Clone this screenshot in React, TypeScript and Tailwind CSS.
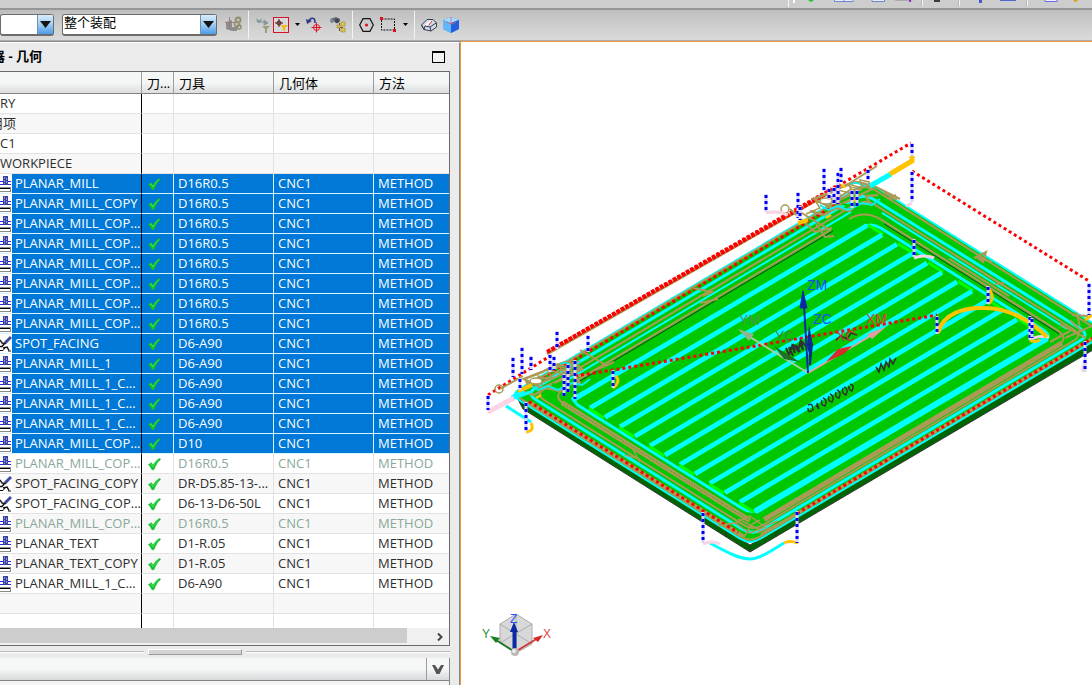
import type { ReactNode } from 'react'

type Kind = 'group' | 'mill' | 'spot'

interface Operation {
  name: string
  kind: Kind
  tool?: string
  state?: 'selected' | 'dimmed'
}

const OPERATIONS: Operation[] = [
  { name: 'RY', kind: 'group' },
  { name: '用项', kind: 'group' },
  { name: 'C1', kind: 'group' },
  { name: 'WORKPIECE', kind: 'group' },
  { name: 'PLANAR_MILL', kind: 'mill', tool: 'D16R0.5', state: 'selected' },
  { name: 'PLANAR_MILL_COPY', kind: 'mill', tool: 'D16R0.5', state: 'selected' },
  { name: 'PLANAR_MILL_COP...', kind: 'mill', tool: 'D16R0.5', state: 'selected' },
  { name: 'PLANAR_MILL_COP...', kind: 'mill', tool: 'D16R0.5', state: 'selected' },
  { name: 'PLANAR_MILL_COP...', kind: 'mill', tool: 'D16R0.5', state: 'selected' },
  { name: 'PLANAR_MILL_COP...', kind: 'mill', tool: 'D16R0.5', state: 'selected' },
  { name: 'PLANAR_MILL_COP...', kind: 'mill', tool: 'D16R0.5', state: 'selected' },
  { name: 'PLANAR_MILL_COP...', kind: 'mill', tool: 'D16R0.5', state: 'selected' },
  { name: 'SPOT_FACING', kind: 'spot', tool: 'D6-A90', state: 'selected' },
  { name: 'PLANAR_MILL_1', kind: 'mill', tool: 'D6-A90', state: 'selected' },
  { name: 'PLANAR_MILL_1_C...', kind: 'mill', tool: 'D6-A90', state: 'selected' },
  { name: 'PLANAR_MILL_1_C...', kind: 'mill', tool: 'D6-A90', state: 'selected' },
  { name: 'PLANAR_MILL_1_C...', kind: 'mill', tool: 'D6-A90', state: 'selected' },
  { name: 'PLANAR_MILL_COP...', kind: 'mill', tool: 'D10', state: 'selected' },
  { name: 'PLANAR_MILL_COP...', kind: 'mill', tool: 'D16R0.5', state: 'dimmed' },
  { name: 'SPOT_FACING_COPY', kind: 'spot', tool: 'DR-D5.85-13-...' },
  { name: 'SPOT_FACING_COP...', kind: 'spot', tool: 'D6-13-D6-50L' },
  { name: 'PLANAR_MILL_COP...', kind: 'mill', tool: 'D16R0.5', state: 'dimmed' },
  { name: 'PLANAR_TEXT', kind: 'mill', tool: 'D1-R.05' },
  { name: 'PLANAR_TEXT_COPY', kind: 'mill', tool: 'D1-R.05' },
  { name: 'PLANAR_MILL_1_C...', kind: 'mill', tool: 'D6-A90' },
]

function MillIcon() {
  return (
    <svg width="12" height="19" viewBox="0 0 12 19" className="shrink-0 bg-white" shapeRendering="crispEdges">
      <path d="M0 7.5H3M0 10.5H3M8 7.5H11M8 10.5H11" stroke="#2a2ae0" />
      <rect x="3" y="2" width="5" height="9" fill="#3d429c" />
      <path d="M4.5 3V10M6.5 4V9" stroke="#8b92d8" strokeDasharray="2 1" />
      <rect x="0" y="13" width="11" height="5" fill="#8a8a8a" />
      <rect x="0" y="14" width="10" height="3" fill="#fff" />
      <path d="M0 14.5H10" stroke="#000" />
    </svg>
  )
}

function SpotIcon() {
  return (
    <svg width="12" height="19" viewBox="0 0 12 19" className="shrink-0 bg-white">
      <path d="M11 3L5 9" stroke="#3f48a0" strokeWidth="3" />
      <path d="M0 6L2 9L6 9.500" stroke="#222" fill="none" strokeWidth="1.500" />
      <path d="M0 12.500H2L4.500 9.500M3 14L7 13L9 16.500" stroke="#111" fill="none" strokeWidth="1.500" />
      <path d="M0 16.500H3L5 14M8 17H11" stroke="#111" fill="none" />
    </svg>
  )
}

function CheckIcon() {
  return (
    <svg width="13" height="14" viewBox="0 0 13 14" role="img" aria-label="OK">
      <path d="M0.5 7.5L3.5 5.8L5 8.5C6.5 5.5 9 2.500 12 1.500L12.400 2.600C9.500 5 7.500 8.500 6 12.600L4 12.800C3.200 10.800 2 9 .5 7.500Z" fill="#10c52c" stroke="#10b428" strokeWidth=".6" />
      <path d="M2 7.300L3.300 6.800L5 10C7 6 9 4 11 2.600" stroke="#3ee052" fill="none" />
    </svg>
  )
}

function ToolButton({ label, children }: { label: string; children: ReactNode }) {
  return (
    <button type="button" aria-label={label} className="flex h-[22px] shrink-0 items-center justify-center">
      {children}
    </button>
  )
}

function Separator() {
  return <span className="h-7 w-px shrink-0 bg-[#f3f3f3]" />
}

function Caret() {
  return (
    <svg width="5" height="3" viewBox="0 0 5 3">
      <path d="M0 0H5L2.5 3Z" fill="#000" />
    </svg>
  )
}

function Target({ x, y, r, color }: { x: number; y: number; r: number; color: string }) {
  return (
    <g stroke={color} fill="none">
      <circle cx={x} cy={y} r={r} />
      <path d={`M${x - r - 2} ${y}H${x + r + 2}M${x} ${y - r - 2}V${y + r + 2}`} />
    </g>
  )
}

function Combo({ label, value, className }: { label: string; value: string; className: string }) {
  return (
    <div className={`relative h-[22px] shrink-0 ${className}`}>
      <select
        aria-label={label}
        className="block h-full w-full appearance-none rounded-[3px] border border-b-2 border-[#6c6c6c] bg-white pb-1 pl-px text-[13px] leading-[15px] text-black"
      >
        <option>{value}</option>
      </select>
      <span className="pointer-events-none absolute top-px right-px flex h-[19px] w-4 items-center justify-center border-l border-[#7291ad] bg-linear-to-b from-[#d9ecfb] via-[#9fcdf3] to-[#4a9be8]">
        <svg width="11" height="7" viewBox="0 0 11 7">
          <path d="M0 0H11L5.5 7Z" fill="#151515" />
        </svg>
      </span>
    </div>
  )
}

function Ribbon() {
  return (
    <div className="flex h-[10px] shrink-0 justify-end overflow-hidden border-b-2 border-[#969696] bg-[#cdcdcd]">
      <svg width="304" height="8" viewBox="788 0 304 8" aria-hidden="true">
        <path d="M788.5 0V7M922.5 0V6M959.5 0V6M1027.5 0V6" stroke="#f5f5f5" />
        <path d="M921.5 0V6M958.5 0V6M1026.5 0V6" stroke="#b5b5b5" />
        <path d="M793 0h2v3h-2z" fill="#fff" />
        <path d="M808 0h6l-3 2z" fill="#16c42d" />
        <path d="M834.5 0V1.5H853V0M872 0V1.5H884.5V0" stroke="#6f86cf" fill="#e8effc" />
        <path d="M844 0V1" stroke="#6f86cf" />
        <path d="M893 0H914L910 1H897Z" fill="#aaa" />
        <path d="M910 0V2" stroke="#8d2bc9" strokeWidth="2" />
        <path d="M934 0h6v2h-6z" fill="#383b45" />
        <path d="M980.5 0V3" stroke="#4559c8" strokeWidth="3" />
        <path d="M1000 0.5H1016" stroke="#5563cf" />
        <path d="M1045 0V1.5H1057V0" stroke="#6a6ae8" fill="#eef" />
        <circle cx="1075.5" cy="0" r="2" fill="#e0a018" />
      </svg>
    </div>
  )
}

function Toolbar() {
  return (
    <div className="flex h-[31px] shrink-0 items-center overflow-hidden border-b border-[#aaaab0] bg-linear-to-b from-[#bebebe] via-[#cecece] to-[#dadada] pb-px">
      <Combo label="类型过滤器" value="" className="w-[54px]" />
      <Combo label="选择范围" value="整个装配" className="ml-2 w-[155px]" />
      <div className="ml-2 flex items-center gap-[6px]">
        <ToolButton label="装配约束">
          <svg width="17" height="18" viewBox="0 0 17 18">
            <path d="M1 6L7 4V15L1 13ZM7 11H12V15H7Z" fill="#8d8d8d" />
            <path d="M4.5 1V12M0 6.5H9" stroke="#9a7f80" />
            <circle cx="13" cy="4" r="2.5" fill="none" stroke="#8f8b6d" strokeWidth="1.8" />
            <circle cx="12" cy="8" r="2.5" fill="none" stroke="#9a9675" strokeWidth="1.8" />
            <circle cx="14" cy="11" r="2" fill="none" stroke="#8f8b6d" strokeWidth="1.5" />
          </svg>
        </ToolButton>
        <Separator />
        <ToolButton label="重置过滤器">
          <svg width="16" height="18" viewBox="0 0 16 18">
            <path d="M1 2L2 6Q4 8 6 6L7 2L5 4L3 4Z" fill="#85979a" />
            <path d="M5 6H10M9 4L13 7L9 9Z" fill="#85979a" stroke="#85979a" />
            <path d="M7 10H15L12 13V17H10V13Z" fill="#a09a80" />
          </svg>
        </ToolButton>
        <button
          type="button"
          aria-label="常规选择过滤器"
          className="-ml-1 flex h-4 w-4 shrink-0 items-center justify-center border border-[#d4122a] bg-[#d9d9d9]"
        >
          <svg width="14" height="14" viewBox="0 0 14 14">
            <Target x={5} y={5} r={2} color="#4a1a20" />
            <path d="M6 7H14L11 10V14L9 12V10Z" fill="#f5b81f" />
          </svg>
        </button>
        <ToolButton label="过滤器选项">
          <Caret />
        </ToolButton>
        <ToolButton label="捕捉点">
          <svg width="17" height="18" viewBox="0 0 17 18">
            <path d="M3 6C3 2 9 0 9 6V7" fill="none" stroke="#2f3a86" strokeWidth="1.6" />
            <path d="M0 3L6 5L1 8Z" fill="#2f3a86" />
            <Target x={10.5} y={11.5} r={3} color="#e01428" />
          </svg>
        </ToolButton>
        <ToolButton label="查找">
          <svg width="17" height="18" viewBox="0 0 17 18">
            <path d="M1 3L7 1L11 3V6L8 4L5 6Z" fill="#5d6670" />
            <circle cx="3" cy="5" r="2" fill="#7d8a99" />
            <circle cx="8" cy="5" r="2.2" fill="#3f4852" />
            <path d="M10.5 7V15M10 11.5H14" stroke="#555" />
            <path d="M12 6h4v4h-4zM12 12h4v4h-4zM8 9h3v3H8z" fill="#e6c443" stroke="#8a7423" strokeWidth=".5" />
          </svg>
        </ToolButton>
        <Separator />
        <ToolButton label="多边形">
          <svg width="15" height="14" viewBox="0 0 15 14">
            <path d="M4 .7H11L14.3 7L11 13.3H4L.7 7Z" fill="none" stroke="#151515" strokeWidth="1.2" />
            <circle cx="7.5" cy="7" r="1.6" fill="#e01020" />
          </svg>
        </ToolButton>
        <ToolButton label="矩形选择">
          <svg width="17" height="15" viewBox="0 0 17 15">
            <rect x="1.5" y="2" width="13" height="11" fill="none" stroke="#111" strokeDasharray="2 1" />
            <path d="M0 0h3v3H0zM13 12h3v3h-3z" fill="#e01020" />
          </svg>
        </ToolButton>
        <ToolButton label="选择方式">
          <Caret />
        </ToolButton>
        <Separator />
        <ToolButton label="着色">
          <svg width="16" height="16" viewBox="0 0 16 16">
            <path d="M.5 8L6 2.5H12L15.5 6V10L10 14L3 12.5Z" fill="#d5dbe6" stroke="#333b4e" />
            <path d="M.5 8L3 12.500L4 9L9 10L15 6M9 10L10 14" stroke="#333b4e" fill="none" />
            <path d="M5 8L10 4" stroke="#fff" strokeWidth="2" />
            <path d="M8 8L11 4" stroke="#d33" />
          </svg>
        </ToolButton>
        <ToolButton label="实体">
          <svg width="16" height="18" viewBox="0 0 16 18">
            <path d="M0 4L8 1L16 4V13L8 17L0 13Z" fill="#2f8df0" />
            <path d="M0 4L8 1L16 4L8 7Z" fill="#a9dcff" />
            <path d="M0 4L8 7V17L0 13Z" fill="#60b8fb" />
            <path d="M8 7L16 4V13L8 17Z" fill="#2260dd" />
            <path d="M8 1V9M3 6L8 8L13 6" stroke="#d8607c" fill="none" strokeWidth=".8" />
          </svg>
        </ToolButton>
      </div>
    </div>
  )
}

function OperationRow({ op, index }: { op: Operation; index: number }) {
  const selected = op.state === 'selected'
  const rowColor = selected
    ? 'bg-[#0078d7] text-white'
    : `${index % 2 ? 'bg-[#f7f7f7]' : 'bg-white'} ${op.state === 'dimmed' ? 'text-[#8aa898]' : 'text-[#2e2e2e]'}`
  const line = selected ? 'border-[#d5f2ff]' : 'border-[#e2e2e2]'
  const isGroup = op.kind === 'group'

  return (
    <tr className={rowColor}>
      <td className={`border-r border-b border-r-black p-0 ${selected ? 'border-b-[#d5f2ff]' : 'border-b-[#e2e2e2]'}`}>
        <div className={`flex h-[19px] items-center overflow-hidden whitespace-nowrap ${isGroup ? '' : 'gap-[3px]'}`}>
          {op.kind === 'mill' && <MillIcon />}
          {op.kind === 'spot' && <SpotIcon />}
          <span className={op.name === '用项' ? '-ml-[10px]' : ''}>{op.name}</span>
        </div>
      </td>
      <td className={`border-r border-b p-0 ${line}`}>
        <div className="flex h-[19px] items-center pl-[6px]">{!isGroup && <CheckIcon />}</div>
      </td>
      <td className={`overflow-hidden border-r border-b p-0 pl-1 whitespace-nowrap ${line}`}>{op.tool}</td>
      <td className={`border-r border-b p-0 pl-1 ${line}`}>{!isGroup && 'CNC1'}</td>
      <td className={`border-b p-0 pl-1 ${line}`}>{!isGroup && 'METHOD'}</td>
    </tr>
  )
}

function Navigator() {
  const head = 'h-[22px] border-r border-b border-r-[#9d9d9d] border-b-[#858585] bg-linear-to-b from-[#f5f6f6] from-50% to-[#dcdddf] p-0 pt-px pl-[5px] text-left font-normal whitespace-nowrap'

  return (
    <aside className="flex w-[461px] max-w-1/2 shrink-0 flex-col border-t border-r border-t-[#8c8c8c] border-r-[#f09a38] bg-[#ebebeb]">
      <div className="flex min-h-0 flex-1 flex-col border-t border-r border-t-white border-r-[#858585]">
        <div className="flex h-7 shrink-0 items-center justify-between overflow-hidden pr-[14px]">
          <h1 className="-ml-2 text-[13px] font-bold whitespace-nowrap text-black">器 - 几何</h1>
          <button type="button" aria-label="最大化" className="h-3 w-[13px] border border-t-2 border-black bg-[#f2f2f2]" />
        </div>

        <div className="mr-[9px] flex min-h-0 flex-1 flex-col border-t border-r border-b border-[#6a6a6a] bg-white">
          <div className="min-h-0 flex-1 overflow-hidden">
            <table className="w-full table-fixed border-separate border-spacing-0 text-[13px] leading-[19px]">
              <colgroup>
                <col />
                <col className="w-8" />
                <col className="w-[100px]" />
                <col className="w-[100px]" />
                <col className="w-[75px]" />
              </colgroup>
              <thead className="leading-5 text-black">
                <tr>
                  <th className={head} aria-label="名称" />
                  <th className={head}>刀...</th>
                  <th className={head}>刀具</th>
                  <th className={head}>几何体</th>
                  <th className="h-[22px] border-b border-[#858585] bg-linear-to-b from-[#f5f6f6] from-50% to-[#dcdddf] p-0 pt-px pl-[5px] text-left font-normal">
                    方法
                  </th>
                </tr>
              </thead>
              <tbody>
                {OPERATIONS.map((op, i) => (
                  <OperationRow key={i} op={op} index={i} />
                ))}
                {['bg-[#f7f7f7]', 'bg-white'].map((bg) => (
                  <tr key={bg} className={bg}>
                    <td className="h-5 border-r border-b border-r-black border-b-[#e2e2e2] p-0" />
                    <td className="border-r border-b border-[#e2e2e2] p-0" />
                    <td className="border-r border-b border-[#e2e2e2] p-0" />
                    <td className="border-r border-b border-[#e2e2e2] p-0" />
                    <td className="border-b border-[#e2e2e2] p-0" />
                  </tr>
                ))}
              </tbody>
            </table>
          </div>
          <div className="flex h-[17px] shrink-0 items-center justify-between bg-[#f0f0f0] pr-[6px]">
            <div className="h-[15px] w-[407px] self-start bg-[#cdcdcd]" />
            <button type="button" aria-label="向右滚动">
              <svg width="6" height="8" viewBox="0 0 6 8" className="block">
                <path d="M1 .5L4.5 4L1 7.5" fill="none" stroke="#444" strokeWidth="2" />
              </svg>
            </button>
          </div>
        </div>

        <div className="mr-[9px] flex h-3 shrink-0 items-center gap-1">
          <span className="h-[2px] w-36 border-b border-white bg-[#b9b9b9]" />
          <span className="h-[6px] w-[94px] border border-t-white border-r-[#999] border-b-[#999] border-l-white bg-[#d4d4d4]" />
          <span className="h-[2px] flex-1 border-b border-white bg-[#b9b9b9]" />
        </div>

        <div className="mr-[9px] flex h-[23px] shrink-0 justify-end border-r border-b border-[#858585] bg-linear-to-b from-[#f6f7f7] from-50% to-[#d8d9da]">
          <button type="button" aria-label="展开" className="flex w-[23px] items-center justify-center border-l border-[#9d9d9d]">
            <svg width="12" height="9" viewBox="0 0 12 9">
              <path d="M0 0H3L6 4.5L9 0H12L7.5 9H4.5Z" fill="#555" />
            </svg>
          </button>
        </div>
        <div className="mr-[9px] h-1 shrink-0 border-r border-[#858585] bg-[#f4f4f4]" />
      </div>
    </aside>
  )
}

// Plate coordinates: u runs towards the upper right, v towards the lower right
function at(u: number, v: number) {
  return `${(522 + u + v).toFixed(1)} ${(402 - 0.593 * u + 0.627 * v).toFixed(1)}`
}

function line(u0: number, v0: number, u1: number, v1: number) {
  return `M${at(u0, v0)}L${at(u1, v1)}`
}

function ring(u0: number, v0: number, u1: number, v1: number, r: number) {
  return (
    `M${at(u0 + r, v0)}L${at(u1 - r, v0)}Q${at(u1, v0)} ${at(u1, v0 + r)}` +
    `L${at(u1, v1 - r)}Q${at(u1, v1)} ${at(u1 - r, v1)}` +
    `L${at(u0 + r, v1)}Q${at(u0, v1)} ${at(u0, v1 - r)}` +
    `L${at(u0, v0 + r)}Q${at(u0, v0)} ${at(u0 + r, v0)}Z`
  )
}

const STRIPES = Array.from({ length: 13 }, (_, i) => 23 + i * 15)

// x, top, bottom of every plunge and retract move
const PLUNGES = [
  [766, 194, 212], [798, 192, 218], [800, 206, 220], [824, 168, 191], [838, 172, 204],
  [841, 167, 182], [829, 188, 200], [834, 187, 204], [868, 169, 180], [912, 143, 156],
  [912, 171, 202], [914, 239, 257], [852, 190, 208], [857, 190, 206], [937, 316, 334],
  [988, 286, 304], [1030, 316, 340], [1032, 318, 338], [1089, 283, 315], [1085, 341, 372],
  [488, 395, 410], [513, 357, 377], [522, 347, 374], [531, 356, 370], [520, 378, 390],
  [557, 331, 349], [550, 354, 372], [554, 356, 370], [588, 335, 352], [564, 374, 396],
  [568, 364, 392], [575, 360, 399], [613, 370, 388], [526, 402, 431], [703, 512, 543],
  [797, 511, 543],
]

// Tangled finishing passes around a boss, reused at both left and top corners
function CornerPasses({ x, y }: { x: number; y: number }) {
  return (
    <g transform={`translate(${x} ${y})`} fill="none" stroke="#aa9a55" strokeWidth="1.5">
      <path d="M-44 20L-30 14L-34 8L-18 10L-22 2L-8 5L-12 -4L4 0L-2 -10L12 -6L10 -14L20 -12" />
      <path d="M-40 17L-26 21L-14 14L0 17L8 9L20 10L16 2L28 1" strokeWidth="2.5" />
      <path d="M-36 5L-18 -2L-6 -8L6 -12L16 -10L22 -5L12 0L-4 8L-18 14Z" strokeWidth="2.5" />
      <path d="M-28 6L-12 4L0 -4L12 -4M-20 9L-4 3L8 -3" strokeWidth="2" />
      <ellipse cx="-24" cy="7" rx="6" ry="3" fill="#fff" />
      <ellipse cx="6" cy="-9" rx="7" ry="3" />
      <path d="M-30 11L-22 16L-12 12L-2 16L12 9L22 11L30 5" stroke="#00f0f0" strokeWidth="2" />
      <path d="M-8 10L2 12L14 5" stroke="#00c800" strokeWidth="2" />
      <path d="M0 -10Q6 -13 11 -9" stroke="#00f0f0" />
      <path d="M-24 24L-19 21M-9 -9L-4 -7M3 7L8 5" stroke="#ffc400" strokeWidth="2.5" />
    </g>
  )
}

function Plate() {
  return (
    <g fill="none">
      <path d={`M${at(0, -4)}L${at(0, 228)}L${at(360, 228)}V340L750 552L523 409Z`} fill="#006400" stroke="#3a3a3a" />
      <path d="M750 545V552M726 531V537M776 530V537" stroke="#333" />
      <path d={ring(0, -12, 358, 228, 10)} fill="#00c800" stroke="#00ffff" strokeWidth="2" />

      <path d={ring(2, -11, 355, 226, 9)} stroke="#aa9a55" strokeWidth="2" />
      <path d={ring(9, -5, 347, 221, 10)} stroke="#00ffff" strokeWidth="3" />
      <path d={ring(13, 0, 343, 218, 10)} stroke="#aa9a55" strokeWidth="2" />
      <path d={line(40, 4, 325, 4) + line(340, 20, 340, 205)} stroke="#00ffff" strokeWidth="2" />
      <path d={line(20, 20, 20, 208) + line(28, 214, 326, 214)} stroke="#aa9a55" strokeWidth="5" />
      <path d={line(20, 20, 20, 208)} stroke="#00b400" strokeDasharray="1 2" />
      <path
        d={`M${at(20, 22)}Q${at(20, 9)} ${at(36, 9)}L${at(300, 9)}M${at(318, 9)}Q${at(334, 9)} ${at(334, 26)}L${at(334, 200)}Q${at(334, 214)} ${at(322, 214)}`}
        stroke="#aa9a55"
        strokeWidth="2"
      />
      <path d={line(45, 11, 300, 11) + line(332, 30, 332, 205)} stroke="#16401c" />
      <path d={line(337, 90, 337, 150) + line(343, 90, 343, 150)} stroke="#aa9a55" strokeWidth="2" />
      <path d={ring(26, 22, 327, 204, 10)} fill="#00c800" stroke="#00ffff" strokeWidth="3" />
      <path d={line(40, 22, 318, 22)} stroke="#00c800" strokeWidth="4" />

      {STRIPES.map((v, i) => (
        <g key={v}>
          <path d={line(i ? 30 : 27, v, 322, v)} stroke="#00ffff" strokeWidth={i === 12 ? 6 : 4.8} />
          {i < STRIPES.length - 1 && (
            <path
              d={i % 2 ? line(29, v, 29, v + 15) : line(323, v, 323, v + 15)}
              stroke="#00ff00"
              strokeWidth="3"
            />
          )}
        </g>
      ))}

      <path d={line(4, 3, 4, 218) + line(14, 225, 350, 225)} stroke="#aa9a55" strokeWidth="3" />
      <path
        d={line(4, 3, 4, 212) + line(50, 225, 350, 225) + line(20, -9, 330, -9)}
        stroke="#ff0000"
        strokeWidth="3"
        strokeDasharray="3 3"
      />
    </g>
  )
}

function Toolpaths() {
  return (
    <g fill="none">
      {/* rapid moves */}
      <path d="M547 354L836 189" stroke="#aa9a55" strokeWidth="3" />
      <path d="M547 352L838 187" stroke="#ff0000" strokeWidth="4" strokeDasharray="4 1" />
      <path d="M560 344L838 185" stroke="#ff0000" strokeWidth="3" strokeDasharray="3 2" />
      <path d="M488 395L550 356M838 186L911 143M912 171L1089 281" stroke="#ff0000" strokeWidth="3" strokeDasharray="3 3" />

      <CornerPasses x={850} y={194} />
      <CornerPasses x={560} y={374} />
      <g stroke="#aa9a55" strokeWidth="2">
        <path d="M500 389L523 376M790 209L815 232L832 228M800 212L830 230M580 350L606 365M596 370L614 362" />
        <circle cx="499" cy="389" r="4" strokeWidth="1.5" />
        <circle cx="785" cy="209" r="4" strokeWidth="1.5" />
        <path d="M845 186L877 166M816 224L825 237L834 236M868 183L900 199" />
        <path d="M884 193L892 197L896 195L890 198L897 199M693 288L712 292L703 296M700 303L718 299" />
        <path d="M974 258L986 252L983 262L976 257L992 262M995 284L1004 283" />
        <path d="M625 455L640 459M632 448L640 462M735 523L750 516L765 527L750 533ZM718 526L740 522" strokeWidth="1.5" />
        <path d="M738 519L760 530M744 537L752 524L760 520M757 533L784 522M764 526L778 521" strokeWidth="1.5" />
        <path d="M1060 324L1086 338M1065 338L1092 326M1070 320L1082 332M1050 342L1070 331M1076 312L1080 326M1072 315L1088 316" />
      </g>

      <path d="M575 376L613 370L690 357L808 337L937 315" stroke="#ff0000" strokeWidth="3" strokeDasharray="3 3" />

      {/* engage and retract arcs */}
      <path d="M506 406L531 422M515 398L530 392M870 186L891 174M710 543C728 553 740 559 750 559C760 559 772 550 784 543" stroke="#00ffff" strokeWidth="3" />
      <path d="M870 186L891 174M512 398L524 391" stroke="#00ffff" strokeWidth="5" />
      <path d="M488 412L514 398" stroke="#f8d4e4" strokeWidth="5" />
      <path d="M766 213Q778 210 788 215M703 544Q712 540 720 544M912 203L906 206M1084 372Q1080 367 1087 362" stroke="#f8d4e4" strokeWidth="3" />
      <path d="M914 258Q924 254 934 258M1031 339Q1040 335 1049 337" stroke="#f8d4e4" strokeWidth="3" />
      <path d="M890 174L912 161V156" stroke="#ffc400" strokeWidth="5" />
      <path d="M938 333C943 313 965 307 985 308C1010 308 1032 322 1047 337" stroke="#ffc400" strokeWidth="4" />
      <path d="M989 289Q996 299 988 304M613 388Q621 382 616 376M526 432Q535 431 531 423M784 543Q790 540 798 543M1030 340Q1034 343 1040 340M1085 320L1092 315" stroke="#ffc400" strokeWidth="3" />
      <path d="M518 391L532 385M798 223L808 220" stroke="#ffc400" strokeWidth="4" />

      {PLUNGES.map(([x, top, bottom], i) => (
        <g key={i} strokeWidth="3">
          <path d={`M${x} ${top}V${bottom}`} stroke="#d6d6ff" />
          <path d={`M${x} ${top + 1}V${bottom}`} stroke="#0000f5" strokeDasharray="3 3" />
        </g>
      ))}
    </g>
  )
}

function Axes() {
  return (
    <g fontFamily="Liberation Sans, sans-serif" fontSize="14">
      {/* engraved text on the part */}
      <g fill="none" stroke="#303030" strokeWidth="1.5">
        <path d="M786 348L789 355L792 346L795 353L793 344L798 351L800 343L803 350L801 341L806 346M789 347L793 356M796 345L800 352" strokeWidth="2" />
        <path d="M876 367L879 372L881 364L884 370L886 362L889 367L890 359L893 364L896 358" />
        <path d="M836 340L841 336L847 339L851 333L857 335" />
        <path d="M808 405Q813 402 813 410Q808 414 808 408M817 403L819 409L816 405M823 398Q828 400 825 406Q820 405 822 400M830 394Q835 396 832 402Q827 401 829 396M837 390Q842 392 839 398Q834 397 836 392M844 387Q849 389 846 395Q841 393 843 388M850 384Q855 385 852 391Q848 390 849 386" />
      </g>
      <path d={line(110, 173, 175, 173)} stroke="#00ffff" strokeWidth="2" />

      <path d="M808 373L742 332" stroke="#a5cfa5" strokeWidth="2" />
      <path d="M738 329L754 334L749 341Z" fill="#8fb58f" />
      <path d="M774 346L800 362L784 359Z" fill="#1f6f24" />
      <path d="M808 373L872 335" stroke="#e8a0a0" strokeWidth="2" />
      <path d="M886 327L872 339L867 334Z" fill="#e39b9b" />
      <path d="M852 346L844 354L826 362L838 349Z" fill="#d62c2c" />
      <path d="M808 373L804 305M810 365V340" stroke="#0a2aa5" strokeWidth="2" />
      <path d="M803 291L807 308L800 308Z" fill="#0a2aa5" stroke="#0a2aa5" />
      <path d="M809 325L813 345L811 364L807 345Z" fill="#0a2a90" />

      <text x="807" y="290" fill="#1450ff">ZM</text>
      <text x="813" y="324" fill="#1450ff">ZC</text>
      <text x="739" y="325" fill="#4f9454">YM</text>
      <text x="775" y="341" fill="#3a8a3c">YC</text>
      <text x="866" y="324" fill="#e03c3c">XM</text>
      <text x="836" y="341" fill="#c83232">XC</text>

      {/* view triad */}
      <path d="M516 614L532 624V644L516 653L500 643V624Z" fill="#d8d8d8" stroke="#adadad" />
      <path d="M500 624L532 644M532 624L500 643M516 614V653" stroke="#adadad" />
      <path d="M515 652L496 640" stroke="#1c7a24" strokeWidth="2" />
      <path d="M490 636L500 638L496 643Z" fill="#167f20" />
      <path d="M515 652L538 638" stroke="#d03838" strokeWidth="2" />
      <path d="M543 635L538 642L533 638Z" fill="#d52a2a" />
      <path d="M514.5 650V630" stroke="#0a2aa5" strokeWidth="4" />
      <path d="M514 622L518 632H510Z" fill="#0a2aa5" />
      <circle cx="515" cy="652" r="4" fill="#b9b9b9" />
      <circle cx="514" cy="651" r="2" fill="#eee" />
      <text x="482" y="638" fontSize="12" fill="#1f9130">Y</text>
      <text x="543" y="638" fontSize="12" fill="#e04545">X</text>
      <text x="510" y="623" fontSize="12" fill="#2a52ff">Z</text>
    </g>
  )
}

function Viewport() {
  return (
    <main className="min-w-0 flex-1 overflow-hidden border-t border-[#f09a38] bg-white">
      <svg
        viewBox="461 42 631 643"
        preserveAspectRatio="xMinYMin slice"
        className="h-full w-full"
        role="img"
        aria-label="刀轨"
      >
        <Plate />
        <Toolpaths />
        <Axes />
      </svg>
    </main>
  )
}

export default function App() {
  return (
    <div className="flex h-screen flex-col overflow-hidden bg-[#ebebeb] font-['Open_Sans','Noto_Sans_CJK_SC',sans-serif]">
      <Ribbon />
      <Toolbar />
      <div className="flex min-h-0 flex-1">
        <Navigator />
        <Viewport />
      </div>
    </div>
  )
}
